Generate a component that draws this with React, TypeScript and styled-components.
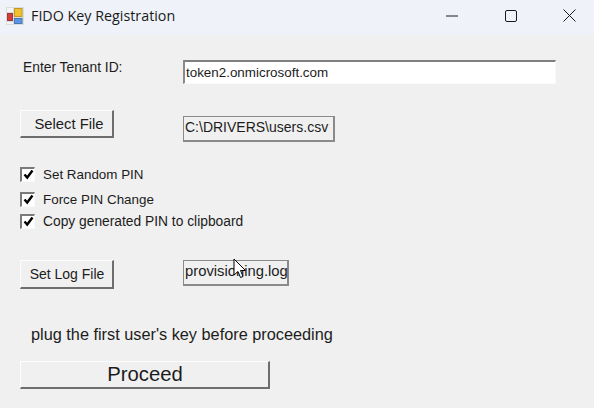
import styled, { createGlobalStyle } from "styled-components";

const GlobalStyle = createGlobalStyle`
  html, body {
    margin: 0;
    padding: 0;
    background: #f0f0f0;
  }
`;

const Window = styled.div`
  position: relative;
  width: 594px;
  height: 408px;
  overflow: hidden;
  background: #f0f0f0;
  font-family: "Liberation Sans", Arial, sans-serif;
  font-size: 13.4px;
  color: #1c1c1c;
`;

const TitleBar = styled.div`
  box-sizing: border-box;
  display: flex;
  align-items: center;
  height: 35px;
  padding: 0 0 4px 6px;
  background: #eff3f9;
`;

const TitleText = styled.span`
  margin-left: 7px;
  font-family: "Open Sans", sans-serif;
  font-size: 14.3px;
  color: #1a1a1a;
`;

const WindowControls = styled.div`
  display: flex;
  margin: 0 -5px 0 auto;
`;

const ControlButton = styled.div`
  display: flex;
  align-items: center;
  justify-content: center;
  width: 59px;
  height: 31px;
`;

const Form = styled.div`
  display: flex;
  flex-direction: column;
  align-items: flex-start;
  padding: 25px 0 0 20px;
`;

const Row = styled.div<{ $top: number }>`
  display: flex;
  align-items: flex-start;
  margin-top: ${(p) => p.$top}px;
`;

const FieldLabel = styled.div`
  width: 163px;
  padding: 0 0 0 3px;
  box-sizing: border-box;
  font-size: 13.8px;
  line-height: 16px;
`;

const TextField = styled.div`
  box-sizing: border-box;
  width: 373px;
  height: 24px;
  padding-left: 1px;
  line-height: 21px;
  background: #fff;
  border-style: solid;
  border-width: 2px 1px 1px 2px;
  border-color: #7f7f7f #fafafa #fafafa #8a8a8a;
`;

const PathBox = styled.div<{ $w: number; $h: number; $top?: number; $size: number }>`
  box-sizing: border-box;
  width: ${(p) => p.$w}px;
  height: ${(p) => p.$h}px;
  margin-top: ${(p) => p.$top || 0}px;
  padding-left: 1px;
  font-size: ${(p) => p.$size}px;
  line-height: 20px;
  white-space: nowrap;
  border-style: solid;
  border-width: 1px 2px 2px 1px;
  border-color: #8a8a8a;
`;

const Button = styled.button<{ $w: number; $h: number; $size?: number; $shift?: number }>`
  box-sizing: border-box;
  width: ${(p) => p.$w}px;
  height: ${(p) => p.$h}px;
  padding: 0 0 0 ${(p) => p.$shift || 0}px;
  font-family: inherit;
  font-size: ${(p) => p.$size || 14}px;
  color: #1c1c1c;
  background: #f0f0f0;
  border-style: solid;
  border-width: 1px 2px 2px 1px;
  border-color: #fcfcfc #6e6e6e #6e6e6e #fcfcfc;
`;

const ButtonSlot = styled.div`
  width: 163px;
`;

const CheckRow = styled.label<{ $top: number }>`
  display: flex;
  align-items: center;
  height: 16px;
  margin-top: ${(p) => p.$top}px;
`;

const CheckBox = styled.span`
  box-sizing: border-box;
  display: flex;
  align-items: center;
  justify-content: center;
  width: 15px;
  height: 15px;
  background: #fff;
  border-style: solid;
  border-width: 2px 1px 1px 2px;
  border-color: #7a7a7a #fafafa #fafafa #7a7a7a;
`;

const CheckText = styled.span<{ $size?: number }>`
  margin-left: 8px;
  font-size: ${(p) => p.$size || 13.4}px;
  white-space: nowrap;
`;

const Message = styled.div`
  margin: 36px 0 0 11px;
  font-size: 16.3px;
  line-height: 18px;
  white-space: nowrap;
`;

const Cursor = styled.svg`
  position: absolute;
  left: 233px;
  top: 258px;
`;

function AppIcon() {
  return (
    <svg width="18" height="18" viewBox="0 0 18 18">
      <rect x="0" y="0" width="18" height="18" fill="#dcdcdc" />
      <rect x="1" y="1" width="6" height="4" fill="#f4f4f4" />
      <rect x="1.5" y="6.5" width="5" height="7" fill="#d83a3a" stroke="#9a3a3a" />
      <rect x="8.5" y="1.5" width="7.5" height="8" fill="#f3c02c" stroke="#c09a30" />
      <rect x="1" y="15" width="6" height="2" fill="#f4f4f4" />
      <rect x="8.5" y="11.5" width="7.5" height="5" fill="#5a96e6" stroke="#4a78b0" />
    </svg>
  );
}

function Tick() {
  return (
    <svg width="11" height="11" viewBox="0 0 11 11">
      <path d="M1.5 5.5 L4.2 8.5 L9.5 1.5" fill="none" stroke="#000" strokeWidth="2.4" />
    </svg>
  );
}

export default function App() {
  return (
    <Window>
      <GlobalStyle />
      <TitleBar>
        <AppIcon />
        <TitleText>FIDO Key Registration</TitleText>
        <WindowControls>
          <ControlButton>
            <svg width="12" height="2" viewBox="0 0 12 2">
              <path d="M0 1H12" stroke="#1a1a1a" strokeWidth="1" />
            </svg>
          </ControlButton>
          <ControlButton>
            <svg width="12" height="12" viewBox="0 0 12 12">
              <rect x="0.5" y="0.5" width="11" height="11" rx="1.5" fill="none" stroke="#1a1a1a" />
            </svg>
          </ControlButton>
          <ControlButton>
            <svg width="13" height="13" viewBox="0 0 13 13">
              <path d="M0.5 0.5L12.5 12.5M12.5 0.5L0.5 12.5" stroke="#1a1a1a" />
            </svg>
          </ControlButton>
        </WindowControls>
      </TitleBar>
      <Form>
        <Row $top={0}>
          <FieldLabel>Enter Tenant ID:</FieldLabel>
          <TextField>token2.onmicrosoft.com</TextField>
        </Row>
        <Row $top={26}>
          <ButtonSlot>
            <Button $w={94} $h={28} $size={14.8} $shift={5}>Select File</Button>
          </ButtonSlot>
          <PathBox $w={152} $h={26} $top={6} $size={14}>C:\DRIVERS\users.csv</PathBox>
        </Row>
        <CheckRow $top={24}><CheckBox><Tick /></CheckBox><CheckText>Set Random PIN</CheckText></CheckRow>
        <CheckRow $top={9}><CheckBox><Tick /></CheckBox><CheckText>Force PIN Change</CheckText></CheckRow>
        <CheckRow $top={6}><CheckBox><Tick /></CheckBox><CheckText $size={13.8}>Copy generated PIN to clipboard</CheckText></CheckRow>
        <Row $top={31}>
          <ButtonSlot>
            <Button $w={94} $h={29} $shift={1}>Set Log File</Button>
          </ButtonSlot>
          <PathBox $w={106} $h={26} $size={14.8}>provisioning.log</PathBox>
        </Row>
        <Message>plug the first user's key before proceeding</Message>
        <Row $top={18}>
          <Button $w={250} $h={28} $size={20.3} $shift={1}>Proceed</Button>
        </Row>
      </Form>
      <Cursor width="14" height="22" viewBox="0 0 14 22">
        <path d="M1 1V17L5 13.5L7.5 19.5L10 18.5L7.5 12.5H12.5Z" fill="#fff" stroke="#000" strokeWidth="1" />
      </Cursor>
    </Window>
  );
}
